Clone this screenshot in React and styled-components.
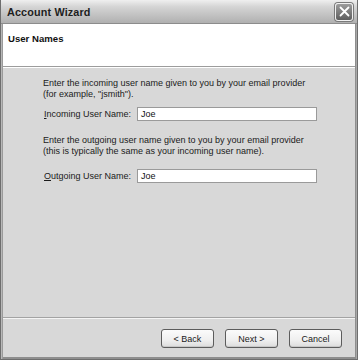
import React from "react";
import styled, { createGlobalStyle } from "styled-components";

const Global = createGlobalStyle`
  html, body { margin: 0; padding: 0; background: #d6d6d6; }
  body { font-family: "Liberation Sans", Arial, sans-serif; }
`;

const Window = styled.div`
  width: 358px;
  height: 360px;
  box-sizing: border-box;
  display: flex;
  flex-direction: column;
  background: #d8d8d8;
  border: 1px solid #6e6e6e;
  border-top: none;
  box-shadow: inset 1px 0 0 #b8b8b8, inset -1px 0 0 #a8a8a8, inset 2px 0 0 #9a9a9a, inset -2px 0 0 #8e8e8e, inset 0 -2px 0 #8e8e8e;
  overflow: hidden;
`;

const TitleBar = styled.div`
  height: 23px;
  flex: none;
  display: flex;
  align-items: center;
  justify-content: space-between;
  padding: 0 3px 0 6px;
  background: linear-gradient(to bottom, #efefef 0%, #d4d4d4 30%, #bdbdbd 75%, #b0b0b0 100%);
  border-bottom: 1px solid #8c8c8c;
  border-left: 1px solid #9a9a9a;
  margin: 0 -1px;
`;

const Title = styled.span`
  font-family: "Liberation Sans", Arial, sans-serif;
  font-weight: bold;
  font-size: 10.8px;
  color: #1e1e1e;
  letter-spacing: 0.15px;
`;

const CloseButton = styled.div`
  width: 16px;
  height: 16px;
  border-radius: 3px;
  background: linear-gradient(to bottom, #9c9c9c, #5e5e5e);
  border: 1px solid #f0f0f0;
  box-shadow: 0 0 0 1px #7a7a7a;
  display: flex;
  align-items: center;
  justify-content: center;
  margin-right: 2px;
`;

const Header = styled.div`
  height: 43px;
  flex: none;
  background: #ffffff;
  margin: 0 2px;
  padding: 9px 5px 0;
  box-sizing: border-box;
  border-bottom: 1px solid #9c9c9c;
`;

const HeaderTitle = styled.div`
  font-family: "Liberation Sans", Arial, sans-serif;
  font-weight: bold;
  font-size: 9.6px;
  color: #111;
`;

const Body = styled.div`
  flex: 1;
  border-top: 1px solid #ffffff;
  margin: 0 2px;
  padding: 10px 0 0 40px;
  display: flex;
  flex-direction: column;
  font-size: 9px;
  color: #1a1a1a;
`;

const Paragraph = styled.p`
  margin: ${(p) => p.$top || 0}px 0 0;
  line-height: 11px;
`;

const FieldRow = styled.label`
  display: grid;
  grid-template-columns: 93px 180px;
  align-items: center;
  margin-top: ${(p) => p.$top || 0}px;
  padding-left: 1px;
`;

const Mnemonic = styled.span`
  text-decoration: underline;
`;

const TextBox = styled.div`
  height: 12px;
  background: #fff;
  border: 1px solid #9a9a9a;
  padding: 0 3px;
  font-size: 9px;
  line-height: 12px;
  color: #111;
`;

const Footer = styled.div`
  flex: none;
  height: 41px;
  margin: 0 2px 1px;
  border-top: 1px solid #a3a3a3;
  box-shadow: inset 0 1px 0 #f4f4f4;
  display: flex;
  justify-content: flex-end;
  align-items: flex-start;
  gap: 11px;
  padding: 11px 13px 0 0;
  box-sizing: border-box;
`;

const Button = styled.div`
  width: 51px;
  height: 17px;
  border: 1px solid #5c5c5c;
  border-radius: 3px;
  background: linear-gradient(to bottom, #fbfbfb 0%, #efefef 60%, #dcdcdc 100%);
  box-shadow: inset 0 -1px 0 #c8c8c8;
  display: flex;
  align-items: center;
  justify-content: center;
  font-size: 9px;
  color: #1a1a1a;
`;

export default function App() {
  return (
    <>
      <Global />
      <Window>
        <TitleBar>
          <Title>Account Wizard</Title>
          <CloseButton>
            <svg width="11" height="11" viewBox="0 0 11 11">
              <path d="M1.5 1.5 L9.5 9.5 M9.5 1.5 L1.5 9.5" stroke="#fff" strokeWidth="1.8" strokeLinecap="round" />
            </svg>
          </CloseButton>
        </TitleBar>
        <Header>
          <HeaderTitle>User Names</HeaderTitle>
        </Header>
        <Body>
          <Paragraph>
            Enter the incoming user name given to you by your email provider
            <br />
            (for example, "jsmith").
          </Paragraph>
          <FieldRow $top={7}>
            <span>
              <Mnemonic>I</Mnemonic>ncoming User Name:
            </span>
            <TextBox>Joe</TextBox>
          </FieldRow>
          <Paragraph $top={14}>
            Enter the outgoing user name given to you by your email provider
            <br />
            (this is typically the same as your incoming user name).
          </Paragraph>
          <FieldRow $top={12}>
            <span>
              <Mnemonic>O</Mnemonic>utgoing User Name:
            </span>
            <TextBox>Joe</TextBox>
          </FieldRow>
        </Body>
        <Footer>
          <Button>&lt; Back</Button>
          <Button>Next &gt;</Button>
          <Button>Cancel</Button>
        </Footer>
      </Window>
    </>
  );
}
